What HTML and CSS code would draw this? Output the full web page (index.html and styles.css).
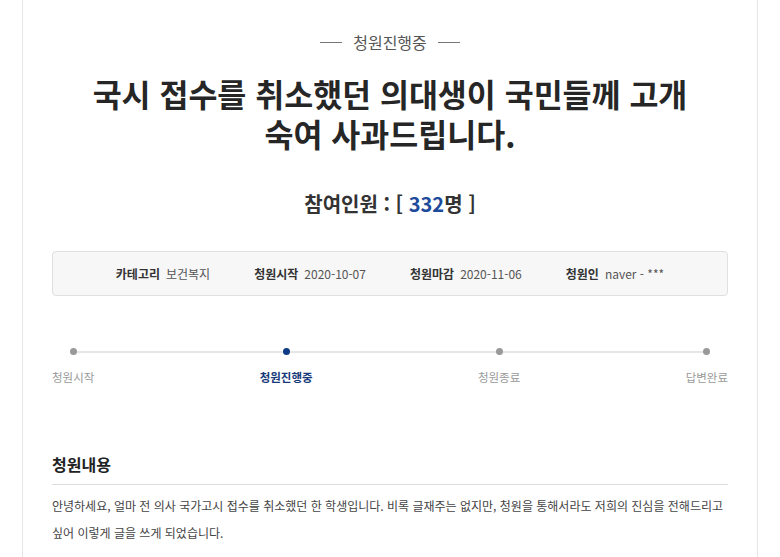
FILE: index.html
```html
<!DOCTYPE html>
<html lang="ko">
<head>
    <meta charset="UTF-8">
    <meta name="viewport" content="width=device-width, initial-scale=1.0">
    <title>국민청원</title>
    <link rel="stylesheet" href="styles.css">
</head>
<body>

<section class="petition">
    <!-- Petition header -->
    <p class="status">청원진행중</p>
    <h1 class="title">국시 접수를 취소했던 의대생이 국민들께 고개<br>숙여 사과드립니다.</h1>
    <p class="count">참여인원 : [ <span class="count-num">332</span>명 ]</p>

    <ul class="info">
        <li><strong>카테고리</strong>보건복지</li>
        <li><strong>청원시작</strong>2020-10-07</li>
        <li><strong>청원마감</strong>2020-11-06</li>
        <li><strong>청원인</strong>naver - ***</li>
    </ul>

    <!-- Progress steps -->
    <ol class="steps">
        <li class="step"><span class="dot"></span><span class="step-name">청원시작</span></li>
        <li class="step active"><span class="dot"></span><span class="step-name">청원진행중</span></li>
        <li class="step"><span class="dot"></span><span class="step-name">청원종료</span></li>
        <li class="step"><span class="dot"></span><span class="step-name">답변완료</span></li>
    </ol>

    <!-- Petition body -->
    <h2 class="content-title">청원내용</h2>
    <div class="content">
        안녕하세요, 얼마 전 의사 국가고시 접수를 취소했던 한 학생입니다. 비록 글재주는 없지만, 청원을 통해서라도 저희의 진심을 전해드리고 싶어 이렇게 글을 쓰게 되었습니다.
    </div>
</section>

</body>
</html>
```

FILE: styles.css
```css
body {
    margin: 0;
    padding: 0;
    font-family: "Noto Sans CJK KR", "Noto Sans", sans-serif;
    background-color: #ffffff;
    color: #333;
}

.petition {
    width: 676px;
    margin-left: 22px;
    padding: 32px 29px 40px;
    border-left: 1px solid #e6e6e6;
    border-right: 1px solid #e6e6e6;
}

/* Status label with dashes on both sides */
.status {
    display: flex;
    justify-content: center;
    align-items: center;
    gap: 11px;
    margin: 0;
    font-size: 16px;
    line-height: 20px;
    color: #555;
}

.status::before, .status::after {
    content: "";
    width: 22px;
    height: 1px;
    background-color: #777;
}

.title {
    margin: 21px 0 0;
    text-align: center;
    font-size: 31.5px;
    line-height: 40px;
    font-weight: bold;
    color: #262626;
}

.count {
    margin: 37px 0 0;
    text-align: center;
    font-size: 20px;
    line-height: 28px;
    font-weight: bold;
    color: #333;
}

.count-num {
    color: #1e4a9c;
}

/* Category / dates / author box */
.info {
    display: flex;
    justify-content: center;
    align-items: center;
    gap: 44px;
    height: 43px;
    margin: 33px 0 0;
    padding: 0;
    list-style: none;
    background-color: #f7f7f7;
    border: 1px solid #e0e0e0;
    border-radius: 4px;
    font-size: 12px;
    color: #555;
}

.info strong {
    margin-right: 6px;
    color: #333;
}

/* Progress steps */
.steps {
    position: relative;
    display: flex;
    justify-content: space-between;
    margin: 52px 0 0;
    padding: 0;
    list-style: none;
}

.steps::before {
    content: "";
    position: absolute;
    top: 2.5px;
    left: 20px;
    right: 22px;
    height: 2px;
    background-color: #e6e6e6;
}

.step {
    position: relative;
    display: flex;
    flex-direction: column;
    align-items: center;
    gap: 14px;
}

.dot {
    width: 7px;
    height: 7px;
    border-radius: 50%;
    background-color: #999;
}

.step-name {
    font-size: 11.5px;
    line-height: 16px;
    color: #999;
}

.step.active .dot {
    background-color: #0f3b85;
}

.step.active .step-name {
    font-weight: bold;
    color: #173a7a;
}

.content-title {
    margin: 68px 0 0;
    padding-bottom: 9px;
    border-bottom: 1px solid #dddddd;
    font-size: 16px;
    line-height: 22px;
    font-weight: bold;
    color: #222;
}

.content {
    margin-top: 7px;
    font-size: 12px;
    line-height: 27px;
    word-break: keep-all;
    color: #444;
}
```
